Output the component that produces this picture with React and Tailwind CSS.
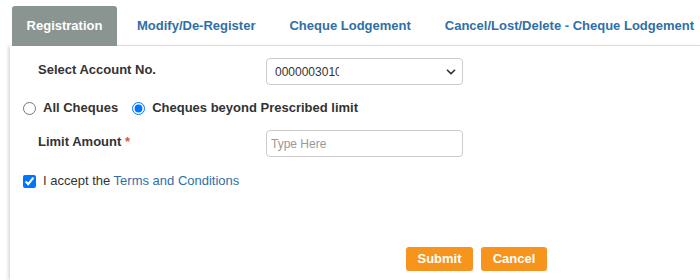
import { ChevronDown } from 'lucide-react'

const tabs = ['Modify/De-Register', 'Cheque Lodgement', 'Cancel/Lost/Delete - Cheque Lodgement']

export default function App() {
  return (
    <div className="w-[700px] h-[280px] bg-white overflow-hidden font-['Liberation_Sans',Arial,sans-serif] text-[13px] text-[#333]">
      {/* tab strip */}
      <div className="flex items-end pl-[12px] pt-[6px]">
        <div className="h-[40px] w-[105px] flex items-center justify-center bg-[#8a9490] rounded-t-[3px] text-white font-bold">
          Registration
        </div>
        <div className="flex-1 flex items-center h-[40px] border-b border-[#ddd] pl-[20px] gap-[34px]">
          {tabs.map((t) => (
            <span key={t} className="font-bold text-[#2f6fa8] whitespace-nowrap">
              {t}
            </span>
          ))}
        </div>
      </div>

      {/* form panel */}
      <div className="ml-[10px] h-[234px] bg-white shadow-[-2px_0_3px_rgba(0,0,0,0.14)] pl-[13px] pt-[12px]">
        <div className="flex items-start">
          <label className="w-[243px] pl-[15px] pt-[2px] font-bold">Select Account No.</label>
          <div className="w-[197px] h-[27px] border border-[#ccc] rounded-[4px] flex items-center justify-between pl-[8px] pr-[4px]">
            <span className="w-[64px] overflow-hidden whitespace-nowrap text-[12px] text-[#333]">0000003010</span>
            <ChevronDown className="w-[14px] h-[14px] text-[#333]" strokeWidth={3} />
          </div>
        </div>

        <div className="flex items-center mt-[14px] h-[18px]">
          <input type="radio" name="chq" className="w-[13px] h-[13px] m-0" />
          <span className="ml-[7px] font-bold">All Cheques</span>
          <input type="radio" name="chq" defaultChecked className="w-[13px] h-[13px] m-0 ml-[14px]" />
          <span className="ml-[7px] font-bold">Cheques beyond Prescribed limit</span>
        </div>

        <div className="flex items-start mt-[13px]">
          <label className="w-[243px] pl-[15px] pt-[2px] font-bold">
            Limit Amount <span className="text-[#e2533c]">*</span>
          </label>
          <input
            placeholder="Type Here"
            className="w-[197px] h-[27px] border border-[#ccc] rounded-[4px] px-[4px] text-[12px] outline-none placeholder:text-[#999]"
          />
        </div>

        <div className="flex items-center mt-[16px] h-[16px]">
          <input type="checkbox" defaultChecked className="w-[13px] h-[13px] m-0" />
          <span className="ml-[7px]">
            I accept the <span className="text-[#2f6fa8]">Terms and Conditions</span>
          </span>
        </div>

        <div className="flex justify-start gap-[8px] mt-[58px] pl-[383px]">
          <button className="w-[67px] h-[24px] bg-[#f7941d] rounded-[3px] text-white font-bold">Submit</button>
          <button className="w-[66px] h-[24px] bg-[#f7941d] rounded-[3px] text-white font-bold">Cancel</button>
        </div>
      </div>
    </div>
  )
}
